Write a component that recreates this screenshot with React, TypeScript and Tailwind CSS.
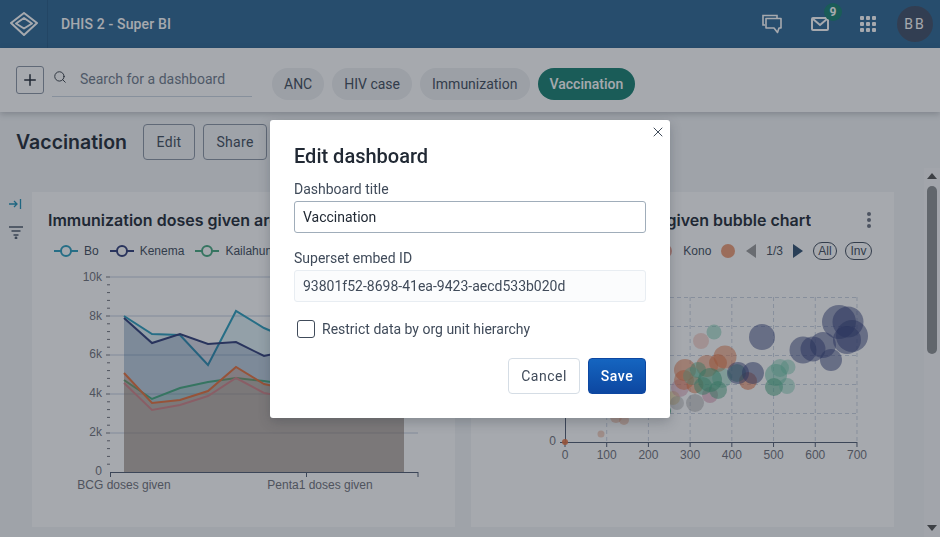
import { Plus, Search, X } from 'lucide-react';

const chips = ['ANC', 'HIV case', 'Immunization', 'Vaccination'];

const areaSeries = [
  { name: 'Bo', color: '#2a9dbd', fill: 0.15, points: [[124, 316], [152, 334], [180, 335], [208, 365], [236, 311], [264, 328], [292, 340], [404, 340]] },
  { name: 'Kenema', color: '#2f3c78', fill: 0.2, points: [[124, 318], [152, 343], [180, 334], [208, 344], [236, 342], [264, 356], [292, 350], [404, 350]] },
  { name: 'Kailahun', color: '#45a87f', fill: 0.15, points: [[124, 380], [152, 399], [180, 388], [208, 382], [236, 378], [264, 381], [292, 385], [404, 385]] },
  { name: 'Pujehun', color: '#c98aa0', fill: 0.04, points: [[124, 383], [152, 410], [180, 405], [208, 396], [236, 378], [264, 393], [292, 398], [404, 398]] },
  { name: 'Kono', color: '#e5703c', fill: 0.25, points: [[124, 373], [152, 403], [180, 400], [208, 391], [236, 367], [264, 384], [292, 390], [404, 390]] },
];

const legend = areaSeries.slice(0, 3);

// cx, cy, r in page coordinates
const bubbles: [number, number, number, string, number][] = [
  [616, 417, 6, '#e5a080', 0.5],
  [624, 420, 5, '#e5a080', 0.5],
  [601, 434, 3.5, '#e5a080', 0.5],
  [565, 442, 3, '#e5703c', 0.9],
  [665, 411, 6, '#45a87f', 0.8],
  [673, 398, 7, '#e8c060', 0.45],
  [677, 403, 7, '#9a9a9a', 0.4],
  [695, 403, 9, '#8f8f8f', 0.4],
  [680, 388, 9, '#d48aa5', 0.45],
  [710, 395, 8, '#d48aa5', 0.5],
  [701, 341, 8, '#e8907a', 0.35],
  [714, 332, 7.5, '#60c0a0', 0.45],
  [725, 357, 11.5, '#e5703c', 0.5],
  [718, 363, 9, '#e5703c', 0.5],
  [707, 366, 11, '#e5703c', 0.45],
  [685, 370, 11, '#e5703c', 0.5],
  [684, 380, 10, '#e5703c', 0.5],
  [695, 385, 8.5, '#e5703c', 0.5],
  [698, 370, 8, '#45a87f', 0.45],
  [692, 376, 9, '#60c0a0', 0.4],
  [722, 378, 10, '#60c0a0', 0.4],
  [710, 380, 12, '#45a87f', 0.55],
  [718, 390, 9, '#45a87f', 0.5],
  [703, 386, 9, '#45a87f', 0.5],
  [748, 381, 9, '#e5703c', 0.55],
  [737, 373, 9, '#45a87f', 0.5],
  [776, 375, 11, '#60c0a0', 0.5],
  [780, 368, 9, '#60c0a0', 0.4],
  [788, 367, 7.5, '#60c0a0', 0.4],
  [774, 387, 9, '#45a87f', 0.55],
  [787, 386, 8, '#60c0a0', 0.4],
  [738, 373, 11, '#2f3c78', 0.5],
  [753, 373, 11, '#2f3c78', 0.5],
  [762, 337, 13, '#2f3c78', 0.5],
  [803, 350, 13.5, '#2f3c78', 0.5],
  [813, 349, 12.5, '#2f3c78', 0.5],
  [823, 345, 13, '#2f3c78', 0.5],
  [831, 360, 11, '#2f3c78', 0.5],
  [839, 322, 17, '#2f3c78', 0.5],
  [848, 322, 15.5, '#2f3c78', 0.5],
  [852, 336, 16, '#2f3c78', 0.5],
  [847, 340, 14, '#2f3c78', 0.5],
];

function Logo() {
  return (
    <svg width="28" height="24" viewBox="0 0 28 24" fill="none" stroke="white" strokeWidth="2" strokeLinejoin="round" className="ml-[1px]">
      <path d="M14 1 L27 11 L14 23 L1 11 Z" />
      <path d="M14 6 L22 11.5 L14 16.5 L6 11.5 Z" />
    </svg>
  );
}

function AreaChart() {
  const ticks = [277, 316, 355, 394, 433];
  const labels = [
    ['10k', 281],
    ['8k', 320],
    ['6k', 358],
    ['4k', 397],
    ['2k', 436],
    ['0', 475],
  ] as const;
  const minor: number[] = [];
  for (let i = 0; i < 5; i++) {
    for (let j = 1; j < 5; j++) minor.push(277 + i * 39 + j * 7.8);
  }
  return (
    <svg width="423" height="240" viewBox="32 264 423 240" className="block font-['Liberation_Sans',sans-serif]">
      {ticks.map((y) => (
        <line key={y} x1="110" x2="418" y1={y} y2={y} stroke="#c5cfe0" strokeWidth="1" />
      ))}
      {[...ticks, ...minor].map((y) => (
        <line key={y} x1={y % 39 === 4 ? 106 : 107} x2="110" y1={y} y2={y} stroke="#6e7079" strokeWidth="1" />
      ))}
      {labels.map(([text, y]) => (
        <text key={text} x="102" y={y} textAnchor="end" fontSize="12" fill="#6e7079">
          {text}
        </text>
      ))}
      {areaSeries.map((s) => {
        const line = s.points.map((p) => p.join(',')).join(' ');
        return (
          <g key={s.name}>
            <polygon points={`124,472 ${line} 404,472`} fill={s.color} fillOpacity={s.fill} />
            <polyline points={line} fill="none" stroke={s.color} strokeWidth="2" />
          </g>
        );
      })}
      <line x1="110" x2="418" y1="472.5" y2="472.5" stroke="#4f5a70" />
      {[110.5, 306.5, 418].map((x) => (
        <line key={x} x1={x} x2={x} y1="472" y2="477" stroke="#4f5a70" />
      ))}
      <text x="124" y="489" textAnchor="middle" fontSize="12" fill="#6e7079">BCG doses given</text>
      <text x="320" y="489" textAnchor="middle" fontSize="12" fill="#6e7079">Penta1 doses given</text>
    </svg>
  );
}

function BubbleChart() {
  const xs = [0, 100, 200, 300, 400, 500, 600, 700];
  const xPos = (v: number) => 565 + v * 0.4171;
  return (
    <svg width="423" height="240" viewBox="471 264 423 240" className="block font-['Liberation_Sans',sans-serif]">
      {xs.slice(1).map((v) => (
        <line key={v} x1={xPos(v)} x2={xPos(v)} y1="297" y2="442" stroke="#ccd4e2" strokeDasharray="4 3" />
      ))}
      {[297.5, 326.5, 355.5, 384.5, 413.5].map((y) => (
        <line key={y} x1="565" x2="857" y1={y} y2={y} stroke="#ccd4e2" strokeDasharray="4 3" />
      ))}
      <line x1="565.5" x2="565.5" y1="297" y2="442" stroke="#4f5a70" />
      <line x1="560" x2="857" y1="442.5" y2="442.5" stroke="#4f5a70" />
      {xs.map((v) => (
        <g key={v}>
          <line x1={xPos(v)} x2={xPos(v)} y1="442" y2="447" stroke="#4f5a70" />
          <text x={xPos(v)} y="459" textAnchor="middle" fontSize="12" fill="#6e7079">{v}</text>
        </g>
      ))}
      <text x="556" y="445" textAnchor="end" fontSize="12" fill="#6e7079">0</text>
      {bubbles.map(([cx, cy, r, color, opacity], i) => (
        <circle key={i} cx={cx} cy={cy} r={r} fill={color} fillOpacity={opacity} />
      ))}
    </svg>
  );
}

function Kebab() {
  return (
    <div className="flex flex-col gap-[2px]">
      <span className="h-1 w-1 rounded-full bg-[#6b7280]" />
      <span className="h-1 w-1 rounded-full bg-[#6b7280]" />
      <span className="h-1 w-1 rounded-full bg-[#6b7280]" />
    </div>
  );
}

export default function App() {
  return (
    <div className="relative flex h-[537px] w-[940px] flex-col overflow-hidden bg-[#f3f5f7] font-['Roboto',sans-serif] text-[#212934]">
      {/* Header */}
      <header className="flex h-12 shrink-0 items-center bg-[#2c6693] text-white">
        <div className="flex h-12 w-12 items-center justify-center border-r border-[#255a85]">
          <Logo />
        </div>
        <span className="ml-[13px] text-sm font-medium tracking-[0.15px]">DHIS 2 - Super BI</span>
        <div className="ml-auto flex items-center">
          <svg width="22" height="22" viewBox="0 0 22 22" fill="none" stroke="white" strokeWidth="1.6" className="mr-[28px]">
            <path d="M4 12 H2 V2.5 H16 V5" />
            <path d="M5 5.5 H20 V15 H18 L16.5 19.5 L13 15 H5 Z" strokeLinejoin="round" />
          </svg>
          <div className="relative mr-[31px]">
            <svg width="18" height="14" viewBox="0 0 18 14" fill="none" stroke="white" strokeWidth="2" className="block">
              <rect x="1" y="1" width="16" height="12" rx="1" />
              <path d="M2 2 L9 8 L16 2" />
            </svg>
            <span className="absolute -right-[13px] -top-[14px] flex h-[18px] w-[18px] items-center justify-center rounded-full bg-[#167f70] text-xs font-bold">
              9
            </span>
          </div>
          <div className="mr-[21px] grid grid-cols-3 gap-[2px]">
            {Array.from({ length: 9 }).map((_, i) => (
              <span key={i} className="h-1 w-1 rounded-[1px] bg-white" />
            ))}
          </div>
          <div className="mr-[7px] flex h-9 w-9 items-center justify-center rounded-full bg-[#3f4e66] text-sm tracking-[2px]">
            BB
          </div>
        </div>
      </header>

      {/* Dashboard bar */}
      <div className="z-10 flex h-16 shrink-0 items-center bg-white pl-4 shadow-[0_2px_6px_rgba(33,41,52,0.25)]">
        <button className="flex h-7 w-7 items-center justify-center rounded-[3px] border border-[#8a94a3]">
          <Plus size={18} strokeWidth={2} />
        </button>
        <div className="relative ml-2 mt-[2px] flex h-8 w-[200px] items-center border-b border-[#cbd5e1] pb-1 pl-7">
          <Search size={14} strokeWidth={1.5} className="absolute left-[1px] top-[5px]" />
          <input
            placeholder="Search for a dashboard"
            className="w-full bg-transparent text-sm outline-none placeholder:text-[#6e7a8a]"
          />
        </div>
        <div className="ml-5 mt-2 flex gap-2">
          {chips.map((chip) => (
            <span
              key={chip}
              className={
                chip === 'Vaccination'
                  ? 'flex h-8 items-center rounded-full bg-[#167f70] px-3 text-sm font-medium text-white'
                  : 'flex h-8 items-center rounded-full bg-[#eef0f2] px-3 text-sm text-[#404b5a]'
              }
            >
              {chip}
            </span>
          ))}
        </div>
      </div>

      {/* Title row */}
      <div className="mt-3 flex h-9 shrink-0 items-center pl-4">
        <h1 className="mr-4 pt-[2px] font-['Inter',sans-serif] text-[19.5px] font-semibold">Vaccination</h1>
        <button className="mr-2 h-9 w-[52px] rounded-[4px] border border-[#8a94a3] text-sm tracking-[0.3px] text-[#404b5a]">Edit</button>
        <button className="h-9 w-16 rounded-[4px] border border-[#8a94a3] text-sm tracking-[0.3px] text-[#404b5a]">Share</button>
      </div>

      {/* Content */}
      <div className="mt-2 flex min-h-0 flex-1">
        <div className="flex w-8 shrink-0 flex-col items-center pt-[30px]">
          <svg width="14" height="12" viewBox="0 0 14 12" fill="none" stroke="#1f8fb5" strokeWidth="1.3" className="mr-[2px]">
            <path d="M1 6 H9 M6 3 L9 6 L6 9 M12.5 1 V11" />
          </svg>
          <svg width="16" height="14" viewBox="0 0 16 14" fill="none" stroke="#4a5768" strokeWidth="1.6" className="ml-[-1px] mt-[15px]">
            <path d="M1 2 H15 M3.5 6 H12.5 M5.5 10 H10.5" />
            <circle cx="8" cy="13" r="0.6" />
          </svg>
        </div>
        <div className="flex flex-1 gap-4 pr-[30px] pt-6">
          <section className="h-[335px] w-[423px] overflow-hidden bg-white">
            <div className="mt-4 flex h-6 items-center justify-between pl-4 pr-6">
              <h2 className="truncate font-['Inter',sans-serif] text-base font-semibold">Immunization doses given area chart</h2>
              <Kebab />
            </div>
            <div className="mt-[9px] flex h-5 items-center pl-[22px] font-['Liberation_Sans',sans-serif] text-xs text-[#404b5a]">
              {legend.map((item) => (
                <div key={item.name} className="mr-[11px] flex items-center gap-[6px]">
                  <svg width="24" height="12" viewBox="0 0 24 12" fill="none" stroke={item.color} strokeWidth="2">
                    <path d="M0 6 H7 M17 6 H24" />
                    <circle cx="12" cy="6" r="5" />
                  </svg>
                  <span>{item.name}</span>
                </div>
              ))}
            </div>
            <div className="mt-[3px]">
              <AreaChart />
            </div>
          </section>

          <section className="h-[335px] w-[423px] overflow-hidden bg-white">
            <div className="mt-4 flex h-6 items-center justify-between pl-9 pr-[23px]">
              <h2 className="truncate font-['Inter',sans-serif] text-base font-semibold">Immunization doses given bubble chart</h2>
              <Kebab />
            </div>
            <div className="mt-[9px] flex h-5 items-center justify-end pr-[22px] font-['Liberation_Sans',sans-serif] text-xs text-[#404b5a]">
              <span className="mr-[11px] h-[14px] w-[14px] rounded-full bg-[#e8a090]" />
              <span className="mr-[10px]">Kono</span>
              <span className="mr-[11px] h-[14px] w-[14px] rounded-full bg-[#e5703c]/70" />
              <svg width="10" height="14" viewBox="0 0 10 14" className="mr-[10px]">
                <path d="M10 0 V14 L0 7 Z" fill="#999" />
              </svg>
              <span className="mr-[10px]">1/3</span>
              <svg width="10" height="14" viewBox="0 0 10 14" className="mr-[10px]">
                <path d="M0 0 V14 L10 7 Z" fill="#2f4f6f" />
              </svg>
              <span className="mr-2 flex h-[18px] w-6 items-center justify-center rounded-full border border-[#404b5a]">All</span>
              <span className="flex h-[18px] w-[27px] items-center justify-center rounded-full border border-[#404b5a]">Inv</span>
            </div>
            <div className="mt-[3px]">
              <BubbleChart />
            </div>
          </section>
        </div>
        {/* Scrollbar */}
        <div className="flex w-4 shrink-0 flex-col items-center bg-[#f8f9fa]">
          <svg width="10" height="6" viewBox="0 0 10 6" className="mt-[5px]">
            <path d="M5 0 L10 6 H0 Z" fill="#505050" />
          </svg>
          <div className="mt-[7px] h-[168px] w-[10px] rounded-full bg-[#8d8f92]" />
          <svg width="10" height="6" viewBox="0 0 10 6" className="mb-[6px] mt-auto">
            <path d="M0 0 H10 L5 6 Z" fill="#505050" />
          </svg>
        </div>
      </div>

      {/* Edit dashboard modal */}
      <div className="fixed inset-0 z-20 flex items-start justify-center bg-[#212934]/40 pt-[120px]">
        <div className="relative w-[400px] rounded-[3px] bg-white p-6 shadow-[0_4px_12px_rgba(33,41,52,0.25)]">
          <button className="absolute right-[4px] top-[4px] text-[#404b5a]">
            <X size={16} strokeWidth={1.5} />
          </button>
          <h2 className="text-xl font-medium leading-6">Edit dashboard</h2>
          <label className="mt-3 block text-sm leading-[19px] text-[#404b5a]">Dashboard title</label>
          <input
            readOnly
            value="Vaccination"
            className="mt-[2px] block h-8 w-full rounded-[3px] border border-[#a0adba] px-2 text-sm text-[#212934] outline-none"
          />
          <label className="mt-4 block text-sm leading-[19px] text-[#404b5a]">Superset embed ID</label>
          <input
            readOnly
            value="93801f52-8698-41ea-9423-aecd533b020d"
            className="mt-[2px] block h-8 w-full rounded-[3px] border border-[#e8edf2] bg-[#fbfcfd] px-2 text-sm text-[#404b5a] outline-none"
          />
          <div className="mt-[17px] flex items-center pl-[3px]">
            <span className="h-[18px] w-[18px] rounded-[3px] border border-[#404b5a]" />
            <span className="ml-[7px] text-sm text-[#404b5a]">Restrict data by org unit hierarchy</span>
          </div>
          <div className="mt-[19px] flex justify-end gap-2">
            <button className="h-9 w-[72px] rounded-[4px] border border-[#d5dde5] text-sm tracking-[0.5px] text-[#404b5a]">Cancel</button>
            <button className="h-9 w-[58px] rounded-[4px] border border-[#0d47a1] bg-gradient-to-b from-[#1565c0] to-[#0d47a1] text-sm font-medium tracking-[0.5px] text-white">Save</button>
          </div>
        </div>
      </div>
    </div>
  );
}
